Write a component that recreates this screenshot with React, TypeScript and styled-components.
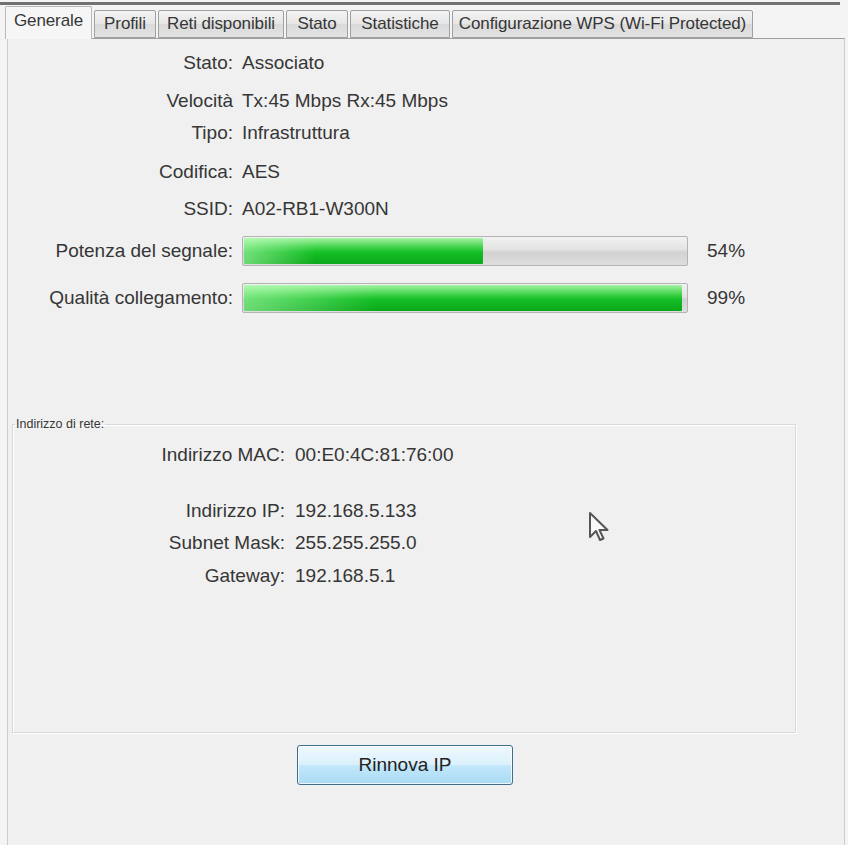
import React from "react";
import styled, { createGlobalStyle } from "styled-components";

const Global = createGlobalStyle`
  html, body { margin: 0; padding: 0; background: #f4f4f4; }
  body { font-family: "Liberation Sans", Arial, sans-serif; }
`;

const Frame = styled.div`
  position: relative;
  width: 848px;
  height: 845px;
  overflow: hidden;
  background: #f4f4f4;
  color: #363636;
  font-family: "Liberation Sans", Arial, sans-serif;
`;

const TopRule = styled.div`
  margin-top: 2px;
  width: 840px;
  height: 3px;
  background: #727272;
`;

const TabStrip = styled.div`
  display: flex;
  align-items: flex-end;
  gap: 2px;
  height: 33px;
  padding-left: 5px;
`;

const Tab = styled.div<{ $w: number; $active?: boolean }>`
  position: relative;
  z-index: ${(p) => (p.$active ? 2 : 1)};
  box-sizing: border-box;
  width: ${(p) => p.$w}px;
  height: ${(p) => (p.$active ? 33 : 28)}px;
  margin-bottom: ${(p) => (p.$active ? -1 : 0)}px;
  display: flex;
  align-items: center;
  justify-content: center;
  padding-bottom: ${(p) => (p.$active ? 4 : 0)}px;
  font-size: 17px;
  letter-spacing: -0.1px;
  color: #363636;
  white-space: nowrap;
  border: 1px solid ${(p) => (p.$active ? "#b9b9b9" : "#a0a0a0")};
  border-bottom: ${(p) => (p.$active ? "none" : "1px solid #a0a0a0")};
  border-radius: 2px 2px 0 0;
  background: ${(p) =>
    p.$active
      ? "#f6f6f6"
      : "linear-gradient(#f3f3f3 0%, #e6e6e6 50%, #dadada 51%, #e2e2e2 100%)"};
`;

const Panel = styled.div`
  position: relative;
  box-sizing: border-box;
  margin-left: 7px;
  width: 838px;
  height: 807px;
  padding-top: 13px;
  background: #f0f0f0;
  border: 1px solid #cdcdcd;
  border-top-color: #9e9e9e;
  border-bottom: none;
`;

const InfoRow = styled.div<{ $mt: number }>`
  display: grid;
  grid-template-columns: 225px 1fr;
  column-gap: 9px;
  margin-top: ${(p) => p.$mt}px;
  font-size: 19px;
  line-height: 22px;
`;

const Label = styled.span`
  text-align: right;
  white-space: nowrap;
`;

const Value = styled.span`
  white-space: nowrap;
`;

const MeterRow = styled.div<{ $mt: number }>`
  display: grid;
  grid-template-columns: 225px 446px auto;
  column-gap: 9px;
  align-items: center;
  margin-top: ${(p) => p.$mt}px;
  height: 30px;
  font-size: 19px;
`;

const Meter = styled.div`
  position: relative;
  box-sizing: border-box;
  height: 30px;
  border: 1px solid #b4b4b4;
  border-radius: 2px;
  padding: 1px;
  background: linear-gradient(#f2f2f2 0%, #e2e2e2 45%, #d2d2d2 55%, #dedede 100%);
`;

const Fill = styled.div`
  height: 100%;
  border-radius: 1px;
  background:
    linear-gradient(90deg, rgba(190, 255, 190, 0.55) 0%, rgba(190, 255, 190, 0) 30%),
    linear-gradient(#a6f3a6 0%, #4fd857 30%, #15bf26 55%, #0aa81a 100%);
`;

const Percent = styled.span`
  margin-left: 10px;
  font-size: 19px;
`;

const GroupBox = styled.fieldset`
  box-sizing: border-box;
  margin: 104px 0 0 4px;
  padding: 0;
  width: 784px;
  height: 316px;
  border: 1px solid #d8d8d8;
  box-shadow: inset 1px 1px 0 #ffffff, 1px 1px 0 #ffffff;
`;

const GroupLegend = styled.legend`
  margin-left: 2px;
  padding: 0 1px;
  font-size: 12.5px;
  line-height: 14px;
  color: #363636;
`;

const AddrRow = styled.div<{ $mt: number }>`
  display: grid;
  grid-template-columns: 272px 1fr;
  column-gap: 10px;
  margin-top: ${(p) => p.$mt}px;
  font-size: 19px;
  line-height: 22px;
`;

const ButtonRow = styled.div`
  display: flex;
  margin-top: 12px;
  padding-left: 289px;
`;

const RenewButton = styled.button`
  box-sizing: border-box;
  width: 216px;
  height: 40px;
  border: 1px solid #3f6f8a;
  border-radius: 3px;
  font-family: "Liberation Sans", Arial, sans-serif;
  font-size: 19px;
  color: #222;
  background: linear-gradient(#eef8fe 0%, #dcf1fc 48%, #c2e7fb 52%, #a9dbf4 100%);
  box-shadow: inset 0 0 0 1px rgba(255, 255, 255, 0.75);
`;

const Cursor = styled.svg`
  position: absolute;
  left: 580px;
  top: 472px;
`;

const tabs = [
  { t: "Generale", w: 87, a: true },
  { t: "Profili", w: 62 },
  { t: "Reti disponibili", w: 126 },
  { t: "Stato", w: 62 },
  { t: "Statistiche", w: 100 },
  { t: "Configurazione WPS (Wi-Fi Protected)", w: 301 },
];

const info = [
  { l: "Stato:", v: "Associato", mt: 0 },
  { l: "Velocità", v: "Tx:45 Mbps Rx:45 Mbps", mt: 16 },
  { l: "Tipo:", v: "Infrastruttura", mt: 10 },
  { l: "Codifica:", v: "AES", mt: 17 },
  { l: "SSID:", v: "A02-RB1-W300N", mt: 15 },
];

const meters = [
  { l: "Potenza del segnale:", p: 54, mt: 16 },
  { l: "Qualità collegamento:", p: 99, mt: 17 },
];

const addrs = [
  { l: "Indirizzo MAC:", v: "00:E0:4C:81:76:00", mt: 13 },
  { l: "Indirizzo IP:", v: "192.168.5.133", mt: 34 },
  { l: "Subnet Mask:", v: "255.255.255.0", mt: 10 },
  { l: "Gateway:", v: "192.168.5.1", mt: 11 },
];

export default function App() {
  return (
    <>
      <Global />
      <Frame>
        <TopRule />
        <TabStrip>
          {tabs.map((t) => (
            <Tab key={t.t} $w={t.w} $active={t.a}>
              {t.t}
            </Tab>
          ))}
        </TabStrip>
        <Panel>
          {info.map((r) => (
            <InfoRow key={r.l} $mt={r.mt}>
              <Label>{r.l}</Label>
              <Value>{r.v}</Value>
            </InfoRow>
          ))}
          {meters.map((m) => (
            <MeterRow key={m.l} $mt={m.mt}>
              <Label>{m.l}</Label>
              <Meter>
                <Fill style={{ width: `${m.p}%` }} />
              </Meter>
              <Percent>{m.p}%</Percent>
            </MeterRow>
          ))}
          <GroupBox>
            <GroupLegend>Indirizzo di rete:</GroupLegend>
            {addrs.map((a) => (
              <AddrRow key={a.l} $mt={a.mt}>
                <Label>{a.l}</Label>
                <Value>{a.v}</Value>
              </AddrRow>
            ))}
          </GroupBox>
          <ButtonRow>
            <RenewButton>Rinnova IP</RenewButton>
          </ButtonRow>
          <Cursor width="22" height="32" viewBox="0 0 22 32">
            <path
              d="M2 2 L2 26 L8 20 L12 29 L15.5 27.5 L11.5 19 L19.5 19 Z"
              fill="#f8f8f8"
              stroke="#555"
              strokeWidth="2"
              strokeLinejoin="round"
            />
          </Cursor>
        </Panel>
      </Frame>
    </>
  );
}
